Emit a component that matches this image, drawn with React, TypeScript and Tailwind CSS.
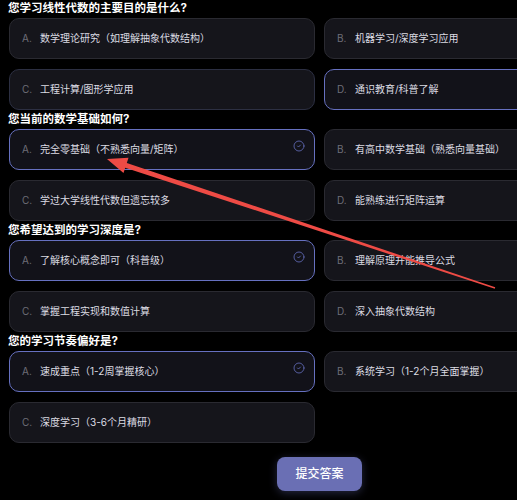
import React from "react";
import { CircleCheck } from "lucide-react";

type Q = { title: string; options: string[]; selected: number; hover?: number };

const questions: Q[] = [
  {
    title: "您学习线性代数的主要目的是什么?",
    options: ["数学理论研究（如理解抽象代数结构）", "机器学习/深度学习应用", "工程计算/图形学应用", "通识教育/科普了解"],
    selected: 3,
    hover: 2,
  },
  {
    title: "您当前的数学基础如何?",
    options: ["完全零基础（不熟悉向量/矩阵）", "有高中数学基础（熟悉向量基础）", "学过大学线性代数但遗忘较多", "能熟练进行矩阵运算"],
    selected: 0,
  },
  {
    title: "您希望达到的学习深度是?",
    options: ["了解核心概念即可（科普级）", "理解原理并能推导公式", "掌握工程实现和数值计算", "深入抽象代数结构"],
    selected: 0,
  },
  {
    title: "您的学习节奏偏好是?",
    options: ["速成重点（1-2周掌握核心）", "系统学习（1-2个月全面掌握）", "深度学习（3-6个月精研）"],
    selected: 0,
  },
];

const letters = ["A.", "B.", "C.", "D."];

function Option({ letter, text, selected, hover }: { letter: string; text: string; selected: boolean; hover: boolean }) {
  return (
    <div
      className={
        "relative h-[41px] rounded-[10px] border flex items-center pl-[12px] " +
        (selected
          ? "border-[#6670c0] bg-[#121219]"
          : hover
          ? "border-[#2c2f42] bg-[#15151b]"
          : "border-[#2a2a31] bg-[#15151b]")
      }
    >
      <span className="w-[18px] text-[10px] text-[#6e6e78]">{letter}</span>
      <span className="text-[10px] text-[#dcdce3] whitespace-nowrap">{text}</span>
      {selected && (
        <CircleCheck className="absolute top-[10px] right-[9px] text-[#6670c0]" size={12} strokeWidth={1.6} />
      )}
    </div>
  );
}

export default function App() {
  return (
    <div
      className="relative w-[517px] h-[500px] overflow-hidden bg-black"
      style={{ fontFamily: 'Inter, "Noto Sans CJK SC", sans-serif' }}
    >
      <div className="w-[639px] px-[9px] flex flex-col">
        {questions.map((q, qi) => (
          <div key={qi} className={qi === 0 ? "" : "mt-[1px]"}>
            <div className="h-[16px] leading-[16px] text-[11.5px] font-bold text-white -ml-[1px] whitespace-nowrap">
              {q.title}
            </div>
            <div className="mt-[2px] grid grid-cols-[306px_306px] gap-x-[9px] gap-y-[10px]">
              {q.options.map((o, oi) => (
                <Option
                  key={oi}
                  letter={letters[oi]}
                  text={o}
                  selected={oi === q.selected}
                  hover={oi === q.hover}
                />
              ))}
            </div>
          </div>
        ))}
        <div className="flex justify-center mt-[14px]">
          <button className="w-[85px] h-[34px] rounded-[8px] bg-[#6a6fb4] text-white text-[12px] font-medium shadow-[0_2px_8px_rgba(106,111,180,0.35)]">
            提交答案
          </button>
        </div>
      </div>
      <svg className="absolute left-0 top-0 pointer-events-none" width="517" height="500" viewBox="0 0 517 500">
        <polygon
          fill="#ee4b45"
          points="107,159 128.5,157.7 126.8,162.9 495.2,287.3 494.8,288.7 125.2,167.7 123.5,172.9"
        />
      </svg>
    </div>
  );
}
